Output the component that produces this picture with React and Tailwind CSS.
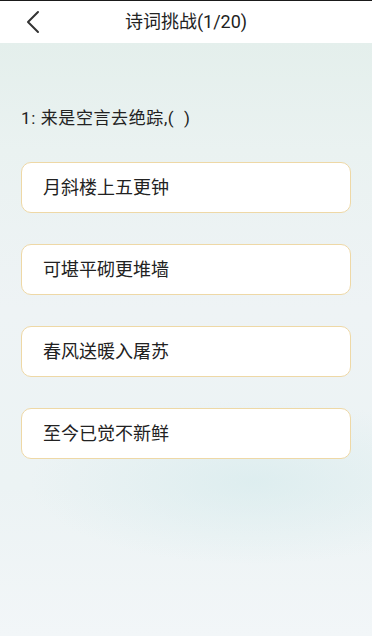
import React from "react";

const options = ["月斜楼上五更钟", "可堪平砌更堆墙", "春风送暖入屠苏", "至今已觉不新鲜"];

export default function App() {
  return (
    <div
      className="w-[372px] h-[636px] flex flex-col overflow-hidden relative"
      style={{ fontFamily: 'Roboto, "Noto Sans CJK SC", sans-serif' }}
    >
      <div className="h-[1px] bg-[#1a1a1a]" />
      <div className="h-[42px] bg-white flex items-center relative shrink-0">
        <svg className="absolute left-[24px] top-[9px]" width="18" height="24" viewBox="0 0 18 24" fill="none">
          <path d="M14 2 L4 12 L14 22" stroke="#333" strokeWidth="2" strokeLinecap="round" strokeLinejoin="round" />
        </svg>
        <div className="w-full text-center text-[18px] text-[#222] leading-none">诗词挑战(1/20)</div>
      </div>
      <div className="flex-1 relative bg-[linear-gradient(180deg,#e4efec_0%,#eaf2f1_18%,#eef3f5_45%,#ecf3f4_75%,#f2f6f8_100%)]">
        <div className="absolute inset-0 bg-[radial-gradient(ellipse_60%_14%_at_68%_74%,rgba(212,234,236,0.6)_0%,rgba(220,236,238,0)_100%)]" />
        <div className="relative px-[21px] pt-[63px] flex flex-col">
          <div className="text-[17px] text-[#222] leading-[24px] tracking-[0.6px]">1: 来是空言去绝踪,(&nbsp;&nbsp;)</div>
          <div className="flex flex-col gap-[31px] mt-[32px]">
            {options.map((o) => (
              <div
                key={o}
                className="h-[51px] bg-white rounded-[10px] border border-[#eed8a6] flex items-center pl-[21px] text-[18px] text-[#222]"
              >
                {o}
              </div>
            ))}
          </div>
        </div>
      </div>
    </div>
  );
}
